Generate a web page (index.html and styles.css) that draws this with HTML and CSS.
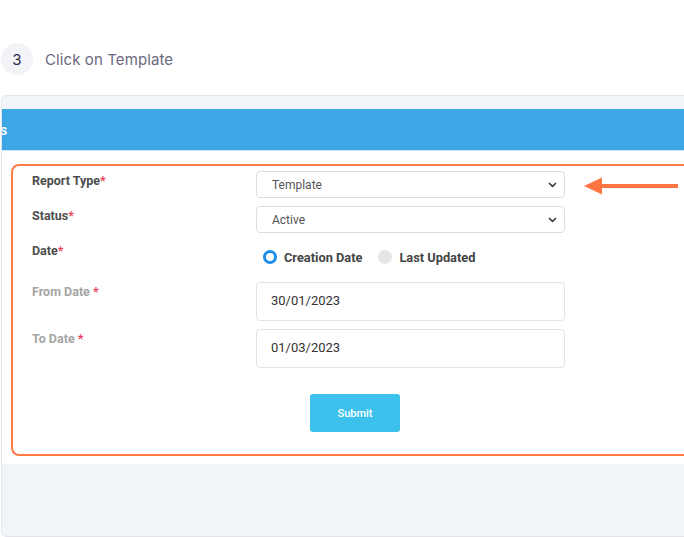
FILE: index.html
```html
<!DOCTYPE html>
<html>
<head>
<meta charset="utf-8">
<link rel="stylesheet" href="styles.css">
</head>
<body>
<div class="step">
  <div class="step-num">3</div>
  <div class="step-text">Click on Template</div>
</div>
<div class="frame">
  <div class="frame-top"></div>
  <div class="header"><span class="header-title">s</span></div>
  <div class="content">
    <div class="highlight">
      <div class="form">
        <div class="label dark">Report Type<span class="req">*</span></div>
        <div class="select"><span>Template</span>
          <svg width="9" height="6" viewBox="0 0 9 6"><path d="M1.5 1.5 L4.5 4.3 L7.5 1.5" fill="none" stroke="#3a3a3a" stroke-width="1.7" stroke-linecap="round" stroke-linejoin="round"/></svg>
        </div>
        <div class="label dark">Status<span class="req">*</span></div>
        <div class="select"><span>Active</span>
          <svg width="9" height="6" viewBox="0 0 9 6"><path d="M1.5 1.5 L4.5 4.3 L7.5 1.5" fill="none" stroke="#3a3a3a" stroke-width="1.7" stroke-linecap="round" stroke-linejoin="round"/></svg>
        </div>
        <div class="label dark">Date<span class="req">*</span></div>
        <div class="radios">
          <span class="radio on"></span><span class="radio-text">Creation Date</span>
          <span class="radio off"></span><span class="radio-text">Last Updated</span>
        </div>
        <div class="label muted">From Date <span class="req">*</span></div>
        <div class="input">30/01/2023</div>
        <div class="label muted">To Date <span class="req">*</span></div>
        <div class="input">01/03/2023</div>
        <div></div>
        <div class="btn-row"><div class="btn">Submit</div></div>
      </div>
    </div>
    <svg class="arrow" width="100" height="20" viewBox="0 0 100 20">
      <path d="M16 8 L94 8 L94 12 L16 12 Z" fill="#ff7443"/>
      <path d="M0 10 L18 1.5 L18 18.5 Z" fill="#ff7443"/>
    </svg>
  </div>
  <div class="bottom"></div>
</div>
</body>
</html>
```
FILE: styles.css
```css
html, body {
  margin: 0;
  padding: 0;
  background: #fff;
  overflow: hidden;
}
body {
  width: 684px;
  height: 537px;
  font-family: Roboto, "Liberation Sans", sans-serif;
}
.step {
  display: flex;
  align-items: center;
  padding: 43px 0 0 1px;
  height: 32px;
}
.step-num {
  width: 32px;
  height: 32px;
  border-radius: 50%;
  background: #f3f4f7;
  color: #2b2a4c;
  font-family: Inter, "Noto Sans", sans-serif;
  font-size: 15px;
  display: flex;
  align-items: center;
  justify-content: center;
}
.step-text {
  margin-left: 12px;
  font-family: Inter, "Noto Sans", sans-serif;
  font-size: 15px;
  color: #6c687e;
  letter-spacing: 0.1px;
}
.frame {
  margin: 20px 0 0 1px;
  width: 740px;
  height: 440px;
  border: 1px solid #e2e4ea;
  border-radius: 6px;
  background: #f1f5f9;
  overflow: hidden;
  display: flex;
  flex-direction: column;
}
.frame-top {
  height: 13px;
  flex: none;
}
.header {
  height: 41px;
  flex: none;
  background: #3ba7e4;
  border-bottom: 1px solid #cfe4f2;
  display: flex;
  align-items: center;
  color: #fff;
  font-size: 14px;
  font-weight: 500;
}
.header-title {
  margin-left: -2px;
}
.content {
  background: #fff;
  height: 313px;
  flex: none;
  display: flex;
  align-items: flex-start;
  position: relative;
}
.highlight {
  margin: 13px 0 0 9px;
  width: 760px;
  height: 288px;
  border: 2px solid #ff7a45;
  border-radius: 8px;
  flex: none;
}
.form {
  display: grid;
  grid-template-columns: 224px 309px;
  grid-template-rows: 27px 27px 33px 39px 39px 38px;
  row-gap: 8px;
  padding: 5px 0 0 19px;
}
.label {
  font-size: 12.5px;
  font-weight: 700;
  line-height: 14px;
  padding-top: 3px;
}
.label.dark { color: #4d4d4d; }
.label.muted { color: #a5a5a5; }
.req { color: #e8425a; }
.select {
  box-sizing: border-box;
  border: 1px solid #d9dde5;
  border-radius: 4px;
  display: flex;
  align-items: center;
  justify-content: space-between;
  padding: 0 7px 0 15px;
  font-size: 12px;
  color: #555;
}
.radios {
  display: flex;
  align-items: center;
  padding-top: 9px;
  height: 14px;
  padding-left: 7px;
  font-size: 12.8px;
  font-weight: 700;
  color: #444;
}
.radio {
  box-sizing: border-box;
  width: 14px;
  height: 14px;
  border-radius: 50%;
  flex: none;
}
.radio.on {
  border: 3.5px solid #1f8ee9;
  background: #fff;
}
.radio.off {
  background: #e5e5e5;
  margin-left: 16px;
}
.radio-text {
  margin-left: 7px;
}
.input {
  box-sizing: border-box;
  border: 1px solid #e0e3ea;
  border-radius: 4px;
  display: flex;
  align-items: center;
  padding-left: 14px;
  font-size: 13px;
  color: #333;
  padding-bottom: 2px;
}
.btn-row {
  display: flex;
  margin-top: 18px;
}
.btn {
  margin-left: 54px;
  width: 90px;
  height: 38px;
  border-radius: 3px;
  background: #3bc1eb;
  color: #fff;
  font-size: 11px;
  font-weight: 500;
  display: flex;
  align-items: center;
  justify-content: center;
}
.arrow {
  position: absolute;
  left: 582px;
  top: 25px;
}
.bottom {
  flex: 1;
}
```
